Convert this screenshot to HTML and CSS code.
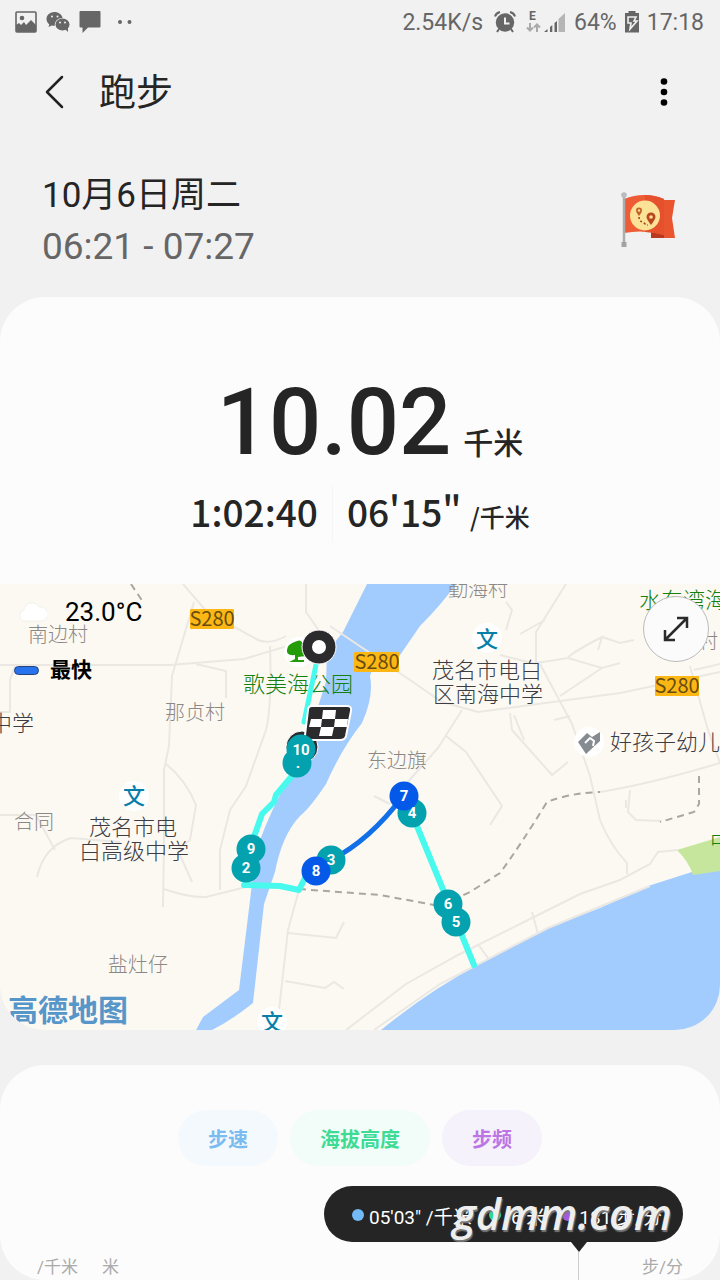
FILE: index.html
```html
<!DOCTYPE html>
<html lang="zh-CN">
<head>
  <meta charset="UTF-8">
  <meta name="viewport" content="width=device-width, initial-scale=1.0">
  <title>跑步</title>
  <link rel="stylesheet" href="styles.css">
</head>
<body>

  <div class="status-bar">
    <div class="status-left">
      <svg width="22" height="22" viewBox="0 0 22 22">
        <path d="M2 1h18a1 1 0 0 1 1 1v18a1 1 0 0 1-1 1H2a1 1 0 0 1-1-1V2a1 1 0 0 1 1-1z" fill="none" stroke="#666" stroke-width="1.6"/>
        <circle cx="7" cy="7" r="2.3" fill="#666"/>
        <path d="M1 14l3-2 2 2 3-3 2 3 5-5 5 5v7H1z" fill="#666"/>
      </svg>
      <svg width="24" height="22" viewBox="0 0 24 22">
        <path d="M8.500 1C4 1 .5 4 .5 8c0 2.200 1.100 4.100 2.800 5.400L2.500 16l3.300-1.600c.9.3 2 .4 3 .4C8.500 10 12 7 16.600 7 15.800 3.400 12.500 1 8.500 1z" fill="#666"/>
        <ellipse cx="16.500" cy="13.500" rx="7" ry="6" fill="#666"/>
        <path d="M19 18l3 3 0-5z" fill="#666"/>
        <g fill="#f1f1f1"><circle cx="6" cy="5.500" r="1"/><circle cx="11.500" cy="5.500" r="1"/><circle cx="14" cy="11.500" r="1"/><circle cx="19" cy="11.500" r="1"/></g>
      </svg>
      <svg width="22" height="22" viewBox="0 0 22 22">
        <path d="M1.500 0h19q1 0 1 1v14.500q0 1-1 1H9L3.500 22v-5.500h-2q-1 0-1-1V1q0-1 1-1z" fill="#666"/>
      </svg>
      <svg class="more-dots" width="16" height="6" viewBox="0 0 16 6">
        <circle cx="3" cy="3" r="2" fill="#666"/><circle cx="12.500" cy="3" r="2" fill="#666"/>
      </svg>
    </div>
    <div class="status-right">
      <span>2.54K/s</span>
      <svg class="alarm" width="22" height="22" viewBox="0 0 22 22">
        <circle cx="11" cy="11.500" r="9.200" fill="#666"/>
        <path d="M1 5.500Q2 2 6 1M21 5.500Q20 2 16 1M5 18l-2 3M17 18l2 3" fill="none" stroke="#666" stroke-width="2"/>
        <path d="M11 6.500v6h4.500" fill="none" stroke="#f1f1f1" stroke-width="2"/>
      </svg>
      <svg width="42" height="24" viewBox="0 0 42 24">
        <text x="4" y="10" class="net-type">E</text>
        <g fill="none" stroke="#aaa" stroke-width="2"><path d="M5 13v8M2 17.500l3 3 3-3M12 22v-8M9 17.500l3-3 3 3"/></g>
        <path d="M19 22l3.500-3v3zM25 17l2.300-2v7H25zM29.500 13l2.500-2v11h-2.500z" fill="#666"/>
        <path d="M33.500 9l6.500-6v19h-6.500z" fill="#b5b5b5"/>
      </svg>
      <span>64%</span>
      <svg width="16" height="22" viewBox="0 0 16 22">
        <path d="M4.500 0h7v2H15v19.500H1V2h3.500z" fill="#666"/>
        <path d="M4 6h8l-2 4h3l-7 8 1-6H4z" fill="none" stroke="#f1f1f1" stroke-width="1.600"/>
      </svg>
      <span>17:18</span>
    </div>
  </div>

  <header class="toolbar">
    <button class="icon-btn" aria-label="返回">
      <svg width="20" height="34" viewBox="0 0 20 34"><path d="M17 2L2 17l15 15" fill="none" stroke="#222" stroke-width="2.500" stroke-linecap="round" stroke-linejoin="round"/></svg>
    </button>
    <h1>跑步</h1>
    <button class="icon-btn menu-btn" aria-label="更多">
      <svg width="8" height="28" viewBox="0 0 8 28"><circle cx="4" cy="3.500" r="3.300"/><circle cx="4" cy="14" r="3.300"/><circle cx="4" cy="24.500" r="3.300"/></svg>
    </button>
  </header>

  <section class="session">
    <div>
      <h2>10月6日周二</h2>
      <p>06:21 - 07:27</p>
    </div>
    <svg width="56" height="58" viewBox="0 0 56 58">
      <path d="M38 8h17l-3 18 3 20H34z" fill="#e8552f"/>
      <path d="M31 40h13v6H31z" fill="#b93820"/>
      <path d="M4 7q20-8 40 0v36q-20-6-40-2z" fill="#ee5c36"/>
      <path d="M25 3q10 0 19 4v36q-9-3-19-3z" fill="#e4512c"/>
      <path d="M4 3v52" stroke="#a9adb0" stroke-width="2.500"/>
      <circle cx="4" cy="3" r="2.800" fill="#b8bcc0"/><path d="M1.500 50h5v5h-5z" fill="#a2a2a2"/>
      <circle cx="25" cy="23.500" r="15" fill="#fbe296"/>
      <path d="M19 25q0 4 5 6 2 2 4 2" fill="none" stroke="#994019" stroke-width="1.500" stroke-dasharray="2 2"/>
      <path d="M19 24q-3-4-3-5.500a3 3 0 0 1 6 0q0 1.500-3 5.500z" fill="#c46128"/><circle cx="19" cy="18.500" r="1.200" fill="#fbe296"/>
      <path d="M31 33q-4.500-6-4.500-8a4.500 4.500 0 0 1 9 0q0 2-4.500 8z" fill="#b84720"/><circle cx="31" cy="25" r="1.800" fill="#fbe296"/>
    </svg>
  </section>

  <main>
    <section class="summary">
      <div class="distance"><strong>10.02</strong><span>千米</span></div>
      <div class="totals">
        <span>1:02:40</span>
        <span class="pace">06'15" <small>/千米</small></span>
      </div>
    </section>

    <section class="map">
      <svg class="map-canvas" viewBox="0 584 720 446" role="img" aria-label="路线地图">
        <rect x="0" y="584" width="720" height="446" fill="#fcf9f3"/>

        <!-- water and park -->
        <g fill="#a3ccfe">
          <path d="M367 584H456Q442 604 420 626L398 658Q376 655 370 676Q374 696 362 723Q342 748 326 784Q310 808 300 816Q282 835 275 872L264 904L253 1003Q232 1020 212 1030H196L203 1017L239 990L252 884L260 840Q272 808 286 784L310 731L326 682L327 652L343 632Z"/>
          <path d="M381 1030Q430 990 478 965L552 926L600 908L648 886L695 871L720 869V1030Z"/>
        </g>
        <path d="M677 850L720 837V871L693 875Q689 862 677 850Z" fill="#c5e69c"/>

        <!-- roads -->
        <g class="road">
          <path d="M183 584L207 612L258 640Q270 645 286 636"/>
          <path d="M194 602L172 676L169 746L164 770V846L163 907"/>
          <path d="M0 665H170L244 659L304 641"/>
          <path d="M10 712V680L15 666M0 712H11M196 664L226 671V698"/>
          <path d="M306 584V612L324 638"/>
          <path d="M330 626L410 680L442 702L478 712L620 693L720 672"/>
          <path d="M270 646Q272 706 266 730L246 786L230 810L220 850V890M166 764Q186 780 196 805L190 840L176 850"/>
          <path d="M164 889Q190 898 206 897L246 887"/>
          <path d="M0 815L36 815L55 850M37 877Q44 846 71 838L120 842M180 855L192 882"/>
          <path d="M566 584L536 632V663L568 658L602 668L620 663M520 634L545 620M506 602L512 610L506 630M568 657Q580 648 602 637L598 650M602 637L620 643L634 640M602 668L560 696"/>
          <path d="M500 655L536 664"/>
          <path d="M540 664L572 724L590 776L600 820Q610 845 627 863V874M690 666L708 730L720 763"/>
          <path d="M510 713L512 730L552 775L568 762M514 715L524 740M554 720L570 716"/>
          <path d="M462 710L438 748L406 784M446 736L466 752L502 806L490 825M374 796L390 804"/>
          <path d="M600 792Q650 784 720 763M630 790L628 812L636 820L662 821M626 800V808M694 670L720 664"/>
          <path d="M346 1030L406 984L458 955L532 918L580 894L620 880L650 864L658 852L678 850"/>
          <path d="M374 1030L440 984L548 928L650 886M532 912L538 934M478 944L488 958"/>
          <path d="M299 890L288 930L279 1010M288 933L336 938L344 922M285 981L325 988L334 982L344 989"/>
        </g>
        <g class="track">
          <path d="M299 889L380 895L440 906L470 892L500 873Q520 846 547 802Q570 793 600 792"/>
          <path d="M699 776V804L694 812L660 822M131 584L143 602"/>
        </g>

        <!-- places -->
        <g class="badge">
          <circle cx="134" cy="796" r="15"/><circle cx="487" cy="638" r="15"/><circle cx="272" cy="1022" r="15"/>
          <circle cx="299" cy="652" r="15"/><circle cx="589" cy="742" r="15"/>
        </g>
        <g class="school">
          <text x="134" y="804">文</text><text x="487" y="647">文</text><text x="272" y="1030">文</text>
        </g>
        <path d="M297 641q4-2 6 3l3 12-8 1v3h6v2h-15l6-3v-4q-9 1-8-5 0-6 10-9z" fill="#249c08"/>
        <path d="M578 742l9-9 5 4 8-5v9l-14 13z" fill="#858b91"/><path d="M585 743l5-5 4 3-1 5" fill="none" stroke="#fff" stroke-width="2"/>
        <g class="place-minor">
          <text x="28" y="642">南边村</text><text x="165" y="720">那贞村</text><text x="367" y="768">东边旗</text>
          <text x="14" y="829">合同</text><text x="108" y="972">盐灶仔</text><text x="448" y="597">勤海村</text><text x="698" y="649">村</text>
        </g>
        <g class="place">
          <text x="-10" y="731">中学</text>
          <text x="89" y="835">茂名市电</text><text x="79" y="859">白高级中学</text>
          <text x="432" y="678">茂名市电白</text><text x="433" y="702">区南海中学</text>
          <text x="610" y="750">好孩子幼儿</text>
        </g>
        <g class="place-park">
          <text x="243" y="692">歌美海公园</text><text x="639" y="608">水东湾海</text><text x="710" y="849">中</text>
        </g>
        <g fill="#fcb714">
          <rect x="190" y="609" width="44" height="20" rx="1"/><rect x="354" y="652" width="45" height="20" rx="1"/><rect x="655" y="676" width="44" height="20" rx="1"/>
        </g>
        <g class="road-no">
          <text x="212" y="626">S280</text><text x="377" y="669">S280</text><text x="677" y="693">S280</text>
        </g>
        <text class="amap" x="8" y="1021">高德地图</text>

        <!-- route -->
        <g fill="none" stroke="#48f9ed" stroke-width="6" stroke-linecap="round" stroke-linejoin="round">
          <path d="M317 660L304 722" stroke-width="5"/>
          <path d="M297 770L276 795L274 802L262 814L250 848"/>
          <path d="M244 885L280 886L299 890L305 878"/>
          <path d="M412 814L456 921L474 965"/>
        </g>
        <path d="M331 860Q370 840 403 796" fill="none" stroke="#1170e8" stroke-width="5"/>
        <circle cx="302" cy="747" r="16" fill="#2b2b2d" stroke="#fff"/>
        <circle cx="319" cy="647" r="17" fill="#2b2b2d" stroke="#fff"/>
        <circle cx="319" cy="647" r="7" fill="#fff"/>
        <g>
          <path d="M312 706H347Q352 706 351 711L346 736Q345 740 340 740H309Q304 740 305 735L308 710Q308 706 312 706Z" fill="#2b2b2d" stroke="#fff" stroke-width="2"/>
          <path d="M323 710h13l-1 9h-13zM311 719h11l-1 8h-12zM335 719h13l-1 8h-13zM321 727h13l-2 9h-13z" fill="#fff"/>
        </g>
        <g fill="#04a1ae">
          <circle cx="297" cy="763" r="14.500"/><circle cx="301" cy="749" r="14.500"/>
          <circle cx="246" cy="868" r="14.500"/><circle cx="251" cy="849" r="14.500"/>
          <circle cx="331" cy="860" r="14.500"/><circle cx="412" cy="813" r="14.500"/>
          <circle cx="456" cy="922" r="14.500"/><circle cx="448" cy="904" r="14.500"/>
        </g>
        <g fill="#0559e9"><circle cx="316" cy="871" r="14.500"/><circle cx="404" cy="796" r="14.500"/></g>
        <g class="km">
          <text x="301" y="755">10</text><text x="298" y="768">.</text><text x="251" y="854">9</text><text x="246" y="873">2</text>
          <text x="331" y="865">3</text><text x="316" y="876">8</text><text x="412" y="818">4</text><text x="404" y="801">7</text>
          <text x="448" y="909">6</text><text x="456" y="927">5</text>
        </g>
      </svg>

      <div class="map-info">
        <svg width="30" height="22" viewBox="0 0 30 22"><path d="M6 20a6 6 0 0 1 1-11 8 8 0 0 1 15-3 7 7 0 0 1 3 14z" fill="#fff" stroke="#f2f0ee"/></svg>
        <span class="temp">23.0°C</span>
        <span class="fast-mark"></span>
        <span class="fast">最快</span>
      </div>
      <button class="expand-btn" aria-label="展开地图">
        <svg width="26" height="26" viewBox="0 0 26 26"><path d="M2 24L24 2M14 2h10v10M2 14v10h10" fill="none" stroke="#2b2b2b" stroke-width="2.500"/></svg>
      </button>
    </section>

    <section class="chart">
      <div class="chips">
        <button class="chip speed">步速</button>
        <button class="chip altitude">海拔高度</button>
        <button class="chip cadence">步频</button>
      </div>
      <div class="tip">
        <span class="dot blue"></span><span>05'03" /千米</span>
        <span class="dot green"></span><span>-6 米</span>
        <span class="dot purple"></span><span>181 步/分</span>
        <span class="watermark">gdmm.com</span>
      </div>
      <div class="axis">
        <span>/千米</span><span>米</span><span class="axis-end">步/分</span>
      </div>
    </section>
  </main>

</body>
</html>
```
FILE: styles.css
```css
* {
  box-sizing: border-box;
}

body {
  margin: 0;
  background: #f1f1f1;
  color: #252525;
  font-family: Roboto, "Noto Sans CJK SC", sans-serif;
}

svg {
  display: block;
  flex-shrink: 0;
}

h1, h2, p {
  margin: 0;
  font-weight: 400;
}

button {
  padding: 0;
  border: none;
  background: none;
  font-family: inherit;
  cursor: pointer;
}

.status-bar {
  display: flex;
  justify-content: space-between;
  align-items: center;
  height: 44px;
  padding: 0 16px 0 15px;
  color: #666;
  font-size: 23px;
}

.status-left,
.status-right {
  display: flex;
  align-items: center;
}

.status-left {
  gap: 9px;
}

.more-dots {
  margin-left: 7px;
}

.status-right {
  gap: 7px;
}

.alarm {
  margin: 0 2px 0 4px;
}

.net-type {
  font-size: 12px;
  font-weight: 700;
  fill: #666;
}

.toolbar {
  display: flex;
  align-items: center;
  height: 96px;
  padding: 0 52px 0 45px;
}

.icon-btn {
  display: flex;
}

.toolbar h1 {
  flex: 1;
  margin-left: 34px;
  padding-top: 4px;
  font-size: 37px;
  line-height: 48px;
}

.session {
  display: flex;
  justify-content: space-between;
  align-items: center;
  padding: 30px 44px 25px 42px;
}

.session h2 {
  font-size: 35px;
  line-height: 52px;
}

.session p {
  color: #666;
  font-size: 37px;
  line-height: 50px;
}

.summary {
  height: 287px;
  padding-top: 74px;
  border-radius: 45px 45px 0 0;
  background: #fcfcfc;
}

.distance {
  display: flex;
  justify-content: center;
  align-items: baseline;
  gap: 12px;
  padding-left: 20px;
}

.distance strong {
  font-size: 92px;
  font-weight: 500;
  line-height: 104px;
}

.distance span {
  font-size: 30px;
  font-weight: 500;
}

.totals {
  display: flex;
  justify-content: center;
  align-items: baseline;
  font-family: "Noto Sans CJK SC", sans-serif;
  font-size: 37px;
  font-weight: 500;
  line-height: 52px;
  margin-top: 10px;
}

.totals .pace {
  margin-left: 14px;
  padding-left: 14px;
  border-left: 1px solid #f6f6f6;
}

.totals small {
  font-size: 25px;
}

.map {
  position: relative;
  overflow: hidden;
  border-radius: 0 0 45px 45px;
}

.map-canvas {
  width: 100%;
  height: auto;
}

.map-canvas text {
  font-family: "Noto Sans CJK SC", sans-serif;
}

.road {
  fill: none;
  stroke: #ebe8e3;
  stroke-width: 2;
}

.track {
  fill: none;
  stroke: #aaa6a2;
  stroke-width: 2;
  stroke-dasharray: 7 5;
}

.badge {
  fill: #fff;
}

.school {
  fill: #087fa8;
  font-size: 22px;
  font-weight: 500;
  text-anchor: middle;
}

.place-minor {
  fill: #8b8885;
  font-size: 20px;
  font-weight: 300;
}

.place {
  fill: #3c3c42;
  font-size: 22px;
  font-weight: 300;
}

.place-park {
  fill: #148010;
  font-size: 22px;
  font-weight: 300;
}

.road-no {
  fill: #684d12;
  font-size: 20px;
  text-anchor: middle;
}

.amap {
  fill: #5796c9;
  font-size: 30px;
  font-weight: 700;
}

.map-canvas .km text {
  font-family: Roboto, sans-serif;
}

.km {
  fill: #fff;
  font-size: 15px;
  font-weight: 700;
  text-anchor: middle;
}

.map-info {
  position: absolute;
  top: 10px;
  left: 14px;
  display: grid;
  grid-template-columns: 36px auto;
  align-items: center;
  color: #000;
}

.map-info svg {
  justify-self: center;
}

.temp {
  padding-left: 15px;
  font-size: 26px;
  line-height: 36px;
}

.fast-mark {
  width: 25px;
  height: 9px;
  border: 1px solid #22437c;
  border-radius: 5px;
  background: #2872ed;
}

.fast {
  font-size: 21px;
  font-weight: 700;
  line-height: 80px;
}

.expand-btn {
  position: absolute;
  top: 12px;
  right: 11px;
  display: flex;
  justify-content: center;
  align-items: center;
  width: 66px;
  height: 66px;
  border: 1px solid #bbb;
  border-radius: 50%;
  background: #fbfbfb;
}

.chart {
  position: relative;
  height: 215px;
  margin-top: 35px;
  padding-top: 45px;
  border-radius: 45px;
  background: #fcfcfc;
}

.chips {
  display: flex;
  justify-content: center;
  gap: 12px;
}

.chip {
  height: 56px;
  padding: 0 30px;
  border-radius: 28px;
  font-size: 20px;
  font-weight: 700;
}

.speed {
  background: #f4f9fd;
  color: #7bbcf0;
}

.altitude {
  background: #f2fcf8;
  color: #3edb95;
}

.cadence {
  background: #f5f2fc;
  color: #bd75e4;
}

.tip {
  position: absolute;
  top: 121px;
  right: 37px;
  display: flex;
  align-items: center;
  width: 359px;
  height: 56px;
  padding: 2px 0 0 28px;
  border-radius: 28px;
  background: #252525;
  color: #fff;
  font-size: 19px;
  white-space: nowrap;
}

.tip::before {
  content: "";
  position: absolute;
  top: 56px;
  left: 247px;
  border: 8px solid transparent;
  border-top: 10px solid #252525;
  border-bottom: none;
}

.tip::after {
  content: "";
  position: absolute;
  top: 66px;
  left: 254px;
  width: 1px;
  height: 28px;
  background: #ccc;
}

.dot {
  width: 12px;
  height: 12px;
  margin: 0 5px 0 17px;
  border-radius: 50%;
}

.dot:first-child {
  margin-left: 0;
}

.blue {
  background: #72b9f7;
}

.green {
  background: #2bd98b;
}

.purple {
  background: #a35bdc;
}

.watermark {
  position: absolute;
  top: 0;
  right: 11px;
  color: #eee;
  font-family: "Open Sans", sans-serif;
  font-size: 43px;
  font-style: italic;
  font-weight: 600;
  line-height: 56px;
  text-shadow: 1px 2px 1px #777;
}

.axis {
  display: flex;
  gap: 24px;
  margin-top: 88px;
  padding: 0 37px;
  color: #aaa;
  font-size: 17px;
  line-height: 26px;
}

.axis-end {
  margin-left: auto;
}
```
